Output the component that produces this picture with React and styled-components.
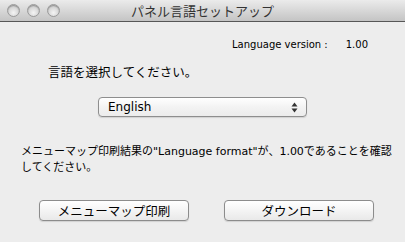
import React from 'react';
import styled, { createGlobalStyle } from 'styled-components';

const GlobalStyle = createGlobalStyle`
  html, body {
    margin: 0;
    padding: 0;
    background: #ededed;
  }
  body {
    font-family: "Lucida Grande", "DejaVu Sans", "Noto Sans CJK JP", sans-serif;
    color: #000;
  }
`;

const Window = styled.div`
  width: 405px;
  height: 242px;
  background: #ededed;
  display: flex;
  flex-direction: column;
  overflow: hidden;
`;

const TitleBar = styled.div`
  height: 21px;
  flex: 0 0 21px;
  position: relative;
  display: flex;
  align-items: center;
  justify-content: center;
  background: linear-gradient(#ebebeb, #c4c4c4);
  border-bottom: 1px solid #575757;
`;

const Lights = styled.div`
  position: absolute;
  left: 7px;
  top: 4px;
  display: flex;
  gap: 7px;
`;

const Light = styled.span`
  width: 13px;
  height: 13px;
  border-radius: 50%;
  box-sizing: border-box;
  border: 1px solid #9a9a9a;
  background: radial-gradient(circle at 50% 70%, #f4f4f4 0%, #d6d6d6 55%, #b4b4b4 100%);
  box-shadow: inset 0 1px 1px rgba(0, 0, 0, 0.25);
`;

const Title = styled.div`
  font-family: "Noto Sans CJK JP", sans-serif;
  font-size: 13px;
  color: #333;
`;

const Body = styled.div`
  display: flex;
  flex-direction: column;
  padding: 15px 0 0 0;
`;

const VersionRow = styled.div`
  display: flex;
  justify-content: flex-end;
  gap: 18px;
  padding-right: 37px;
  font-size: 10px;
  height: 16px;
  line-height: 16px;
`;

const Prompt = styled.div`
  font-family: "Noto Sans CJK JP", sans-serif;
  font-size: 12.5px;
  margin: 10px 0 0 48px;
  height: 18px;
  line-height: 18px;
`;

const SelectWrap = styled.div`
  display: flex;
  padding-left: 98px;
  margin-top: 16px;
`;

const Popup = styled.div`
  width: 209px;
  height: 20px;
  box-sizing: border-box;
  border: 1px solid #8e8e8e;
  border-radius: 4px;
  background: linear-gradient(#ffffff, #f3f3f3 50%, #ececec);
  box-shadow: 0 1px 1px rgba(0, 0, 0, 0.12);
  display: flex;
  align-items: center;
  justify-content: space-between;
  padding: 0 8px 0 9px;
  font-size: 12px;
`;

const Arrows = styled.svg`
  display: block;
`;

const Note = styled.div`
  font-size: 11px;
  line-height: 16px;
  margin: 27px 0 0 21px;
  white-space: nowrap;
`;

const ButtonRow = styled.div`
  display: flex;
  gap: 35px;
  padding-left: 39px;
  margin-top: 24px;
`;

const Button = styled.button`
  width: 150px;
  height: 21px;
  box-sizing: border-box;
  border: 1px solid #8c8c8c;
  border-radius: 4px;
  background: linear-gradient(#ffffff, #f4f4f4 50%, #e9e9e9);
  box-shadow: 0 1px 1px rgba(0, 0, 0, 0.12);
  font-family: "Noto Sans CJK JP", sans-serif;
  font-size: 12.5px;
  color: #000;
  padding: 0;
  line-height: 19px;
`;

export default function App() {
  return (
    <>
      <GlobalStyle />
      <Window>
        <TitleBar>
          <Lights>
            <Light />
            <Light />
            <Light />
          </Lights>
          <Title>パネル言語セットアップ</Title>
        </TitleBar>
        <Body>
          <VersionRow>
            <span>Language version :</span>
            <span>1.00</span>
          </VersionRow>
          <Prompt>言語を選択してください。</Prompt>
          <SelectWrap>
            <Popup>
              <span>English</span>
              <Arrows width="7" height="11" viewBox="0 0 7 11">
                <path d="M3.5 0.5 L6.5 4.5 L0.5 4.5 Z" fill="#333" />
                <path d="M3.5 10.5 L6.5 6.5 L0.5 6.5 Z" fill="#333" />
              </Arrows>
            </Popup>
          </SelectWrap>
          <Note>
            メニューマップ印刷結果の"Language format"が、1.00であることを確認
            <br />
            してください。
          </Note>
          <ButtonRow>
            <Button>メニューマップ印刷</Button>
            <Button>ダウンロード</Button>
          </ButtonRow>
        </Body>
      </Window>
    </>
  );
}
